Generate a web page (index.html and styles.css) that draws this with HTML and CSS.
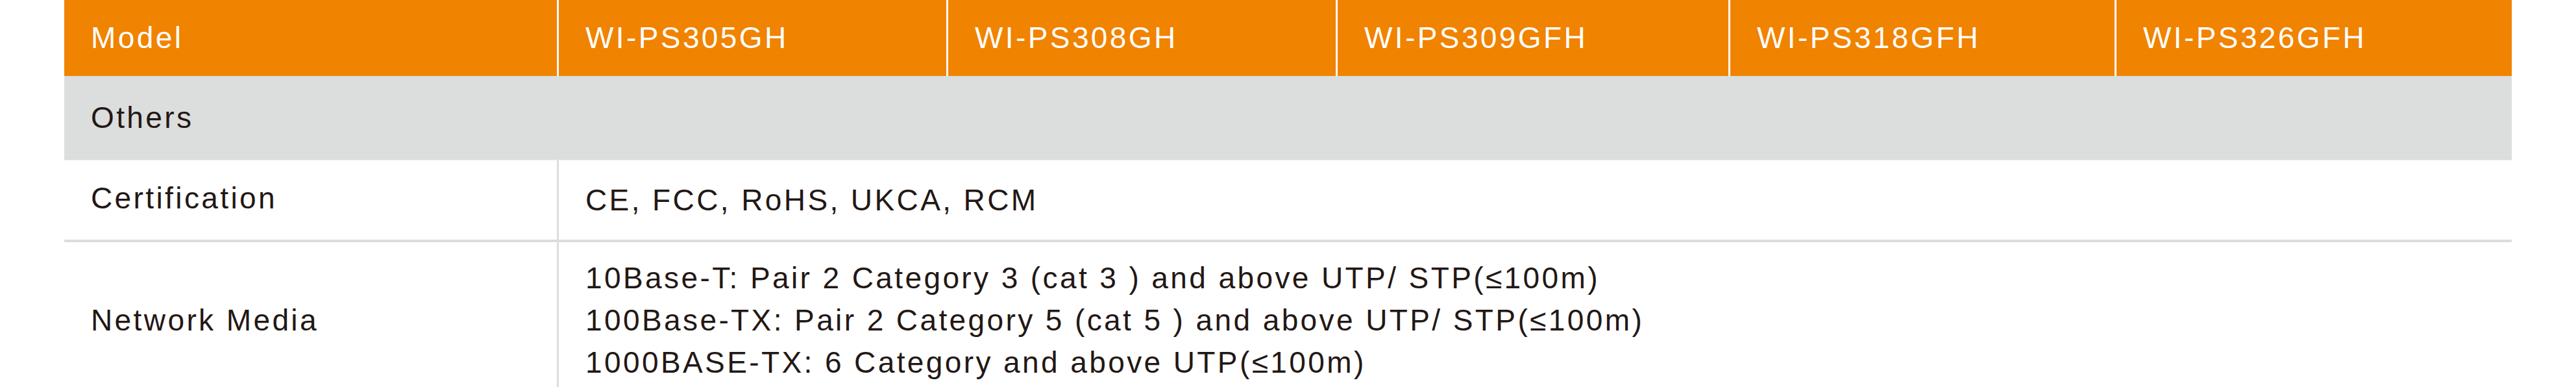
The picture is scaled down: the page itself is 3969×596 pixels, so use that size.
FILE: index.html
```html
<!DOCTYPE html>
<html lang="en">
<head>
<meta charset="utf-8">
<title>Specifications</title>
<link rel="stylesheet" href="styles.css">
</head>
<body>
<div class="wrap">
  <table class="spec">
    <colgroup>
      <col class="c-label">
      <col class="c-600">
      <col class="c-600">
      <col class="c-605">
      <col class="c-595">
      <col class="c-609">
    </colgroup>
    <thead>
      <tr>
        <th>Model</th>
        <th>WI-PS305GH</th>
        <th>WI-PS308GH</th>
        <th>WI-PS309GFH</th>
        <th>WI-PS318GFH</th>
        <th class="last">WI-PS326GFH</th>
      </tr>
    </thead>
    <tbody>
      <tr class="section">
        <td colspan="6">Others</td>
      </tr>
      <tr class="cert">
        <td class="label">Certification</td>
        <td colspan="5">CE, FCC, RoHS, UKCA, RCM</td>
      </tr>
      <tr class="media">
        <td class="label">Network Media</td>
        <td colspan="5">10Base-T: Pair 2 Category 3 (cat 3 ) and above UTP/ STP(≤100m)<br>100Base-TX: Pair 2 Category 5 (cat 5 ) and above UTP/ STP(≤100m)<br>1000BASE-TX: 6 Category and above UTP(≤100m)</td>
      </tr>
    </tbody>
  </table>
</div>
</body>
</html>
```

FILE: styles.css
```css
html, body {
  margin: 0;
  padding: 0;
  background: #ffffff;
}

.wrap {
  padding-left: 99px;
}

.spec {
  width: 3771px;
  table-layout: fixed;
  border-collapse: separate;
  border-spacing: 0;
  font-family: "Liberation Sans", Arial, sans-serif;
  font-size: 46px;
  letter-spacing: 3.4px;
  line-height: 65px;
  color: #231815;
}

.c-label { width: 762px; }
.c-600 { width: 600px; }
.c-605 { width: 605px; }
.c-595 { width: 595px; }
.c-609 { width: 609px; }

.spec th,
.spec td {
  box-sizing: border-box;
  text-align: left;
  vertical-align: middle;
  font-weight: normal;
  padding: 0 40px 0 41px;
}

.spec th {
  background: #f08300;
  color: #ffffff;
  padding-top: 26px;
  padding-bottom: 26px;
  border-right: 3px solid #ffffff;
}

.spec th.last {
  border-right: none;
}

.section td {
  background: #dcdddd;
  padding-top: 32px;
  padding-bottom: 32px;
  border-bottom: 1px solid #ececec;
}

.cert td {
  padding-top: 29px;
  padding-bottom: 28px;
  border-bottom: 4px solid #dcdddd;
}

.cert td.label {
  padding-top: 26px;
  padding-bottom: 31px;
}

.media td {
  padding-top: 23px;
  padding-bottom: 23px;
}

.spec td.label {
  border-right: 3px solid #dcdddd;
}
```
